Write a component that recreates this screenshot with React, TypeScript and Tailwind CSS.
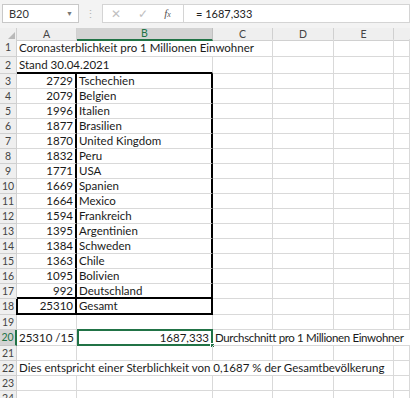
import React from "react";

type Cell = {
  text?: string;
  span?: number;
  align?: "left" | "right";
  cls?: string;
  active?: boolean;
};

const cols = "grid grid-cols-[17px_60px_136px_60px_61px_60px_1fr]";
const gridLine = "border-r border-b border-[#d9d9d9]";

const countries: [string, string][] = [
  ["2729", "Tschechien"],
  ["2079", "Belgien"],
  ["1996", "Italien"],
  ["1877", "Brasilien"],
  ["1870", "United Kingdom"],
  ["1832", "Peru"],
  ["1771", "USA"],
  ["1669", "Spanien"],
  ["1664", "Mexico"],
  ["1594", "Frankreich"],
  ["1395", "Argentinien"],
  ["1384", "Schweden"],
  ["1363", "Chile"],
  ["1095", "Bolivien"],
  ["992", "Deutschland"],
];

function Row({ n, h, cells, hl }: { n: number; h: string; cells: Cell[]; hl?: boolean }) {
  return (
    <div className={`${cols} ${h}`}>
      <div
        className={`flex items-center justify-center text-[10.5px] ${
          hl
            ? "bg-[#d3d3d3] text-[#217346] border-r-2 border-r-[#217346] border-b border-b-[#c6c6c6]"
            : "bg-[#efefef] text-[#444] border-r border-b border-[#d0d0d0]"
        }`}
      >
        {n}
      </div>
      {cells.map((c, i) => (
        <div
          key={i}
          style={c.span ? { gridColumn: `span ${c.span} / span ${c.span}` } : undefined}
          className={`relative flex items-center whitespace-nowrap overflow-visible px-[2px] ${
            c.align === "right" ? "justify-end" : "justify-start"
          } ${c.cls ?? gridLine}`}
        >
          {c.text}
          {c.active && (
            <span className="absolute -right-[4px] -bottom-[4px] w-[5px] h-[5px] bg-[#217346] border border-white" />
          )}
        </div>
      ))}
    </div>
  );
}

const empty = (k: number): Cell[] => Array.from({ length: k }, () => ({}));

export default function App() {
  return (
    <div className="w-[410px] h-[398px] overflow-hidden bg-white text-[#1a1a1a] font-['Lato',_'Liberation_Sans',_sans-serif] text-[11.5px] leading-none">
      {/* formula bar */}
      <div className="h-[28px] bg-[#f3f3f3] flex items-start pt-[4px]">
        <div className="ml-[2px] w-[77px] h-[19px] bg-white border border-[#c8c8c8] flex items-center justify-between pl-[6px] pr-[5px] text-[#333] text-[11px]">
          <span>B20</span>
          <span className="text-[7px] text-[#777]">▼</span>
        </div>
        <div className="w-[23px] h-[19px] flex items-center justify-center text-[#b5b5b5] text-[11px]">⋮</div>
        <div className="flex-1 h-[19px] bg-white border border-[#d4d4d4] flex items-stretch">
          <div className="w-[81px] flex items-center justify-around pr-[4px] border-r border-[#d4d4d4]">
            <span className="text-[#c0c0c0] text-[12px]">✕</span>
            <span className="text-[#c0c0c0] text-[12px]">✓</span>
            <span className="text-[#555] text-[11px] italic font-['Liberation_Serif',_serif]">
              f<span className="text-[8px]">x</span>
            </span>
          </div>
          <div className="flex items-center pl-[12px] text-[#222] text-[11px]">= 1687,333</div>
        </div>
      </div>

      {/* column headers */}
      <div className={`${cols} h-[11px] text-[10.5px] text-[#444]`}>
        <div className="bg-[#efefef] border-r border-b border-[#d0d0d0] flex items-end justify-end p-[1px]">
          <svg width="7" height="7" viewBox="0 0 7 7">
            <polygon points="7,0 7,7 0,7" fill="#b9b9b9" />
          </svg>
        </div>
        <div className="bg-[#efefef] border-r border-b border-[#d0d0d0] flex items-center justify-center">A</div>
        <div className="bg-[#d3d3d3] border-r border-[#c0c0c0] border-b-2 border-b-[#217346] flex items-center justify-center text-[#217346]">B</div>
        <div className="bg-[#efefef] border-r border-b border-[#d0d0d0] flex items-center justify-center">C</div>
        <div className="bg-[#efefef] border-r border-b border-[#d0d0d0] flex items-center justify-center">D</div>
        <div className="bg-[#efefef] border-r border-b border-[#d0d0d0] flex items-center justify-center">E</div>
        <div className="bg-[#efefef] border-b border-[#d0d0d0]" />
      </div>

      <Row n={1} h="h-[18px]" cells={[{ text: "Coronasterblichkeit pro 1 Millionen Einwohner", span: 3 }, ...empty(3)]} />
      <Row
        n={2}
        h="h-[17px]"
        cells={[
          { text: "Stand 30.04.2021", span: 2, cls: "border-r border-r-[#d9d9d9] border-b-2 border-b-black" },
          ...empty(4),
        ]}
      />
      {countries.map(([v, name], i) => (
        <Row
          key={name}
          n={i + 3}
          h="h-[15px]"
          cells={[
            {
              text: v,
              align: "right",
              cls: `border-b border-b-[#d9d9d9] border-r-2 border-r-black ${i === 14 ? "border-b-2 border-b-black" : ""}`,
            },
            {
              text: name,
              cls: `border-b border-b-[#d9d9d9] border-r-2 border-r-black ${i === 14 ? "border-b-2 border-b-black" : ""}`,
            },
            ...empty(4),
          ]}
        />
      ))}
      <Row
        n={18}
        h="h-[16px]"
        cells={[
          { text: "25310", align: "right", cls: "border-l-2 border-l-black border-b-2 border-b-black border-r-2 border-r-black -ml-[1px]" },
          { text: "Gesamt", cls: "border-b-2 border-b-black border-r-2 border-r-black" },
          ...empty(4),
        ]}
      />
      <Row n={19} h="h-[15px]" cells={empty(6)} />
      <Row
        n={20}
        h="h-[16px]"
        hl
        cells={[
          { text: "25310 /15" },
          { text: "1687,333", align: "right", active: true, cls: "border-2 border-[#217346] -mt-[1px]" },
          {
            text: "Durchschnitt pro 1 Millionen Einwohner",
            span: 4,
            cls: "border-b border-[#d9d9d9] tracking-[-0.35px]",
          },
        ]}
      />
      <Row n={21} h="h-[15px]" cells={empty(6)} />
      <Row
        n={22}
        h="h-[15px]"
        cells={[{ text: "Dies entspricht einer Sterblichkeit von 0,1687 % der Gesamtbevölkerung", span: 5 }, {}]}
      />
      <Row n={23} h="h-[15px]" cells={empty(6)} />
      <Row n={24} h="h-[15px]" cells={empty(6)} />
    </div>
  );
}
